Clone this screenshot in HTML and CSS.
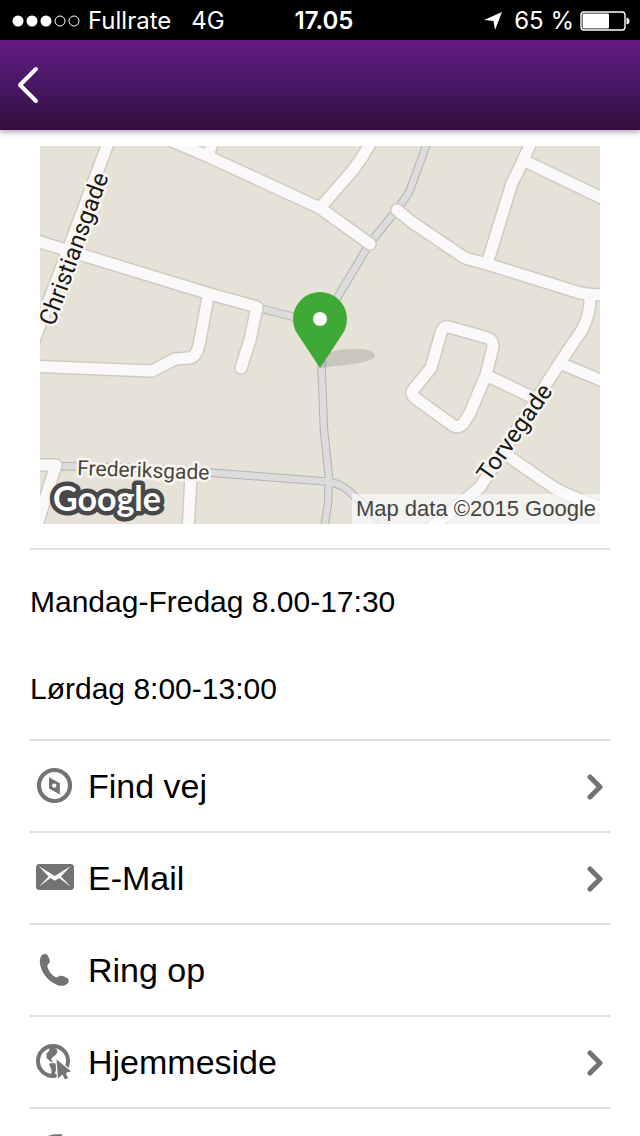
FILE: index.html
```html
<!DOCTYPE html>
<html lang="da">
<head>
    <meta charset="UTF-8">
    <meta name="viewport" content="width=device-width, initial-scale=1.0">
    <title>Kontakt</title>
    <link rel="stylesheet" href="styles.css">
</head>
<body>
    <div class="status-bar">
        <div class="status-left">
            <svg class="signal" viewBox="0 0 68 12" aria-hidden="true">
                <g fill="#fff">
                    <circle cx="6" cy="6" r="5.5"/>
                    <circle cx="20" cy="6" r="5.5"/>
                    <circle cx="34" cy="6" r="5.5"/>
                </g>
                <g fill="none" stroke="#fff">
                    <circle cx="48" cy="6" r="5"/>
                    <circle cx="62" cy="6" r="5"/>
                </g>
            </svg>
            <span>Fullrate</span>
            <span class="network">4G</span>
        </div>
        <span class="clock">17.05</span>
        <div class="status-right">
            <svg class="location" viewBox="0 0 18 18" aria-hidden="true">
                <path d="M18 0 L11 18 L9.5 9 L0 8 Z" fill="#fff"/>
            </svg>
            <span>65 %</span>
            <svg class="battery" viewBox="0 0 50 20" aria-hidden="true">
                <rect x="1" y="1" width="44" height="18" rx="3" fill="none" stroke="#fff" stroke-width="1.4"/>
                <rect x="2.5" y="2.5" width="26.5" height="15" rx="1" fill="#fff"/>
                <path d="M46.5 6.5 Q49.5 7 49.5 10 Q49.5 13 46.5 13.5 Z" fill="#fff"/>
            </svg>
        </div>
    </div>

    <header class="nav-bar">
        <button class="back-btn" type="button" aria-label="Tilbage">
            <svg viewBox="0 0 24 40" aria-hidden="true">
                <path d="M20 4 L4 20 L20 36" fill="none" stroke="#fff" stroke-width="4" stroke-linecap="round" stroke-linejoin="round"/>
            </svg>
        </button>
    </header>

    <main class="content">
        <div class="map">
            <svg class="map-canvas" viewBox="40 146 560 378">
                <defs>
                    <g id="paths" fill="none" stroke-linejoin="round">
                        <path d="M429 138 L426 146 L410 190 Q405 200 387 222 L370 243 L340 293 L320 330 L322 380 L324 430 L329 478 L328 503 L324 530"/>
                        <path d="M255 307 L310 321"/>
                        <path d="M55 466 L140 468 L215 473 L320 481 Q338 481 350 492 L390 530"/>
                    </g>
                    <g id="roads" fill="none" stroke-linejoin="round" stroke-linecap="round">
                        <path d="M110 138 L107 146 L38 330 L30 352"/>
                        <path d="M30 239 L40 242 L210 294 L257 307 L250 340 L241 368"/>
                        <path d="M208 297 L200 340 Q197 359 188 358 L175 359 L152 371 L30 366"/>
                        <path d="M165 138 L207 156 L320 208 L370 244"/>
                        <path d="M214 138 L209 153"/>
                        <path d="M320 208 L353 170 Q364 156 373 138"/>
                        <path d="M397 210 L413 223 L465 258 L487 264 L577 292 Q586 295 610 295"/>
                        <path d="M487 264 L512 183 L520 167 L533 138"/>
                        <path d="M527 162 L610 202"/>
                        <path d="M590 296 Q591 312 582 330 L563 358 L520 425 L480 487 L447 515 L425 532"/>
                        <path d="M562 364 L610 384"/>
                        <path d="M441 333 L431 368 L413 390 Q410 394 415 398 L451 424 Q457 429 463 424 L470 413 L486 375 L493 347 Q493 340 488 338 L449 327 Q443 326 441 333"/>
                        <path d="M488 376 L536 399"/>
                        <path d="M508 456 L553 487 Q568 496 610 511"/>
                        <path d="M30 465 L56 465 L36 528"/>
                        <path d="M191 476 L188 532"/>
                    </g>
                </defs>
                <rect x="40" y="146" width="560" height="378" fill="#e7e2d8"/>
                <use href="#paths" stroke="#b3b3b1" stroke-width="8.5"/>
                <use href="#paths" stroke="#dcdcdc" stroke-width="6.5"/>
                <use href="#roads" stroke="#d0cbc0" stroke-width="14"/>
                <use href="#roads" stroke="#faf8f8" stroke-width="11"/>

                <g class="street">
                    <text transform="translate(54 327) rotate(-70)">Christiansgade</text>
                    <text class="muted" transform="translate(77 475) rotate(2)">Frederiksgade</text>
                    <text transform="translate(489 483) rotate(-55)">Torvegade</text>
                </g>

                <text class="map-logo" x="53" y="511">Google</text>

                <path d="M320 368 L330 352 Q345 348 360 349 Q375 350 375 356 Q374 362 345 365 Z" fill="#000" fill-opacity=".12"/>
                <path d="M320 368 L297.5 334 A27 27 0 1 1 342.5 334 Z" fill="#3fa935"/>
                <circle cx="320" cy="319" r="7" fill="#fff"/>
            </svg>
            <span class="map-credit">Map data ©2015 Google</span>
        </div>

        <section class="hours">
            <p>Mandag-Fredag 8.00-17:30</p>
            <p>Lørdag 8:00-13:00</p>
        </section>

        <nav class="actions">
            <a href="#find">
                <svg class="icon" viewBox="0 0 40 40" aria-hidden="true">
                    <circle cx="19.5" cy="19.5" r="15.5" fill="none" stroke="#737373" stroke-width="4.2"/>
                    <path d="M14 11.3 L24.8 17.3 V28.5 L14 22.5 Z" fill="#737373"/>
                    <circle cx="19.3" cy="19.6" r="2.2" fill="#fff"/>
                </svg>
                <span class="label">Find vej</span>
                <svg class="chevron" viewBox="0 0 18 28" aria-hidden="true"><path d="M4 5 L14 15 L4 25"/></svg>
            </a>
            <a href="#mail">
                <svg class="icon" viewBox="0 0 40 40" aria-hidden="true">
                    <rect x="1" y="6" width="38" height="26" rx="3.5" fill="#737373"/>
                    <path d="M4 8.3 L19.8 18 L35.5 8.3 L26 18.5 L35.8 28.8 L24 20 L19.8 22.8 L15.5 20 L4 28.8 L13.5 18.5 Z" fill="#fff"/>
                </svg>
                <span class="label">E-Mail</span>
                <svg class="chevron" viewBox="0 0 18 28" aria-hidden="true"><path d="M4 5 L14 15 L4 25"/></svg>
            </a>
            <a href="#ring">
                <svg class="icon" viewBox="0 0 40 40" aria-hidden="true">
                    <path d="M7 5 C9 3.5 12 3.8 13 6 C14 8.5 15.5 10.5 14.5 12.5 C13.8 14 12 14.5 12.3 16.5 C13.5 21 16.5 25 20.5 27 C22.5 28 23 26 25.5 25.7 C28 25.5 30.5 27 32.5 28.3 C34 29.5 34 31.5 33 33 C30 36.5 25 36.7 20 34 C12 29.5 6.5 22.5 5 14 C4.5 10.5 5 7 7 5 Z" fill="#737373"/>
                </svg>
                <span class="label">Ring op</span>
            </a>
            <a href="#web">
                <svg class="icon" viewBox="0 0 40 40" aria-hidden="true">
                    <circle cx="18" cy="19" r="15" fill="none" stroke="#737373" stroke-width="4"/>
                    <path d="M15 5 L19 4.5 L22.5 8.5 L22 11 L20 13.5 L18.5 14.5 L16 17 L18 20 L15.5 19.5 L11.5 16 L11.5 11.5 L14 9 Z" fill="#737373"/>
                    <path d="M14 22 Q18 20 22 22.5 L21 28 L19 34 L16 34 L16.5 28 Z" fill="#737373"/>
                    <path d="M21.5 17.5 L23 36.5 L27.5 32.5 L30 37.5 L33 36 L30.8 31 L36 29.3 Z" fill="#737373" stroke="#fff" stroke-width="2.4" paint-order="stroke"/>
                </svg>
                <span class="label">Hjemmeside</span>
                <svg class="chevron" viewBox="0 0 18 28" aria-hidden="true"><path d="M4 5 L14 15 L4 25"/></svg>
            </a>
            <a href="#more" aria-label="Mere">
                <svg class="icon" viewBox="0 0 40 40" aria-hidden="true">
                    <path d="M13 2 Q16 0 27 0 L25 12 L32 16 L18 38 L20 20 L10 18 Z" fill="#737373"/>
                </svg>
            </a>
        </nav>
    </main>
</body>
</html>
```
FILE: styles.css
```css
* {
    box-sizing: border-box;
}

body {
    display: flex;
    flex-direction: column;
    height: 100vh;
    margin: 0;
    background: #fff;
    color: #000;
    font-family: "Liberation Sans", Arial, sans-serif;
}

.status-bar {
    display: grid;
    grid-template-columns: 1fr auto 1fr;
    align-items: center;
    flex: none;
    height: 40px;
    padding: 0 12px;
    background: #000;
    color: #fff;
    font-family: Inter, sans-serif;
    font-size: 24px;
    line-height: 42px;
}

.status-left,
.status-right {
    display: flex;
    align-items: center;
    gap: 8px;
}

.status-right {
    justify-content: flex-end;
    margin-right: -2px;
}

.signal {
    width: 68px;
    height: 12px;
}

.network {
    margin-left: 12px;
}

.clock {
    margin-left: 8px;
    font-weight: 600;
}

.location {
    width: 18px;
    height: 18px;
    margin-right: 4px;
}

.battery {
    width: 50px;
    height: 20px;
    margin-left: -2px;
}

.nav-bar {
    position: relative;
    display: flex;
    align-items: center;
    flex: none;
    height: 90px;
    padding: 0 16px;
    background: linear-gradient(#661b84, #4b1868 45%, #320e3e);
    box-shadow: 0 2px 6px rgba(50, 14, 62, 0.4);
}

.back-btn {
    padding: 0;
    border: none;
    background: none;
    cursor: pointer;
}

.back-btn svg {
    display: block;
    width: 24px;
    height: 40px;
}

.content {
    flex: 1;
    padding: 16px 30px 0;
    overflow-y: auto;
    scrollbar-width: none;
}

/* Map */
.map {
    position: relative;
    margin: 0 10px 24px;
}

.map-canvas {
    display: block;
    width: 100%;
    height: auto;
}

.street {
    font-family: Roboto, sans-serif;
    font-size: 24px;
    fill: #1c1a17;
    stroke: #f8f6f2;
    stroke-width: 5px;
    stroke-linejoin: round;
    paint-order: stroke;
}

.street .muted {
    font-size: 21px;
    fill: #4a453c;
}

.map-logo {
    font-family: Lato, sans-serif;
    font-size: 34px;
    font-weight: 700;
    fill: #fff;
    stroke: #484848;
    stroke-width: 9px;
    stroke-linejoin: round;
    paint-order: stroke;
}

.map-credit {
    position: absolute;
    right: 0;
    bottom: 0;
    padding: 0 4px;
    background: rgba(255, 255, 255, 0.6);
    color: #444;
    font-size: 22px;
    line-height: 30px;
}

/* Opening hours */
.hours {
    padding: 34px 0 33px;
    border-top: 2px solid #e0e0e0;
    border-bottom: 2px solid #e0e0e0;
    font-size: 30px;
    line-height: 35px;
}

.hours p {
    margin: 0;
}

.hours p + p {
    margin-top: 52px;
}

/* Contact links */
.actions a {
    display: flex;
    align-items: center;
    height: 92px;
    padding: 0 6px 0 5px;
    border-bottom: 2px solid #e0e0e0;
    color: #000;
    font-size: 34px;
    text-decoration: none;
}

.icon {
    width: 40px;
    height: 40px;
    margin-right: 13px;
}

.label {
    flex: 1;
}

.chevron {
    width: 18px;
    height: 28px;
}

.chevron path {
    fill: none;
    stroke: #737373;
    stroke-width: 5px;
    stroke-linecap: round;
    stroke-linejoin: round;
}
```
